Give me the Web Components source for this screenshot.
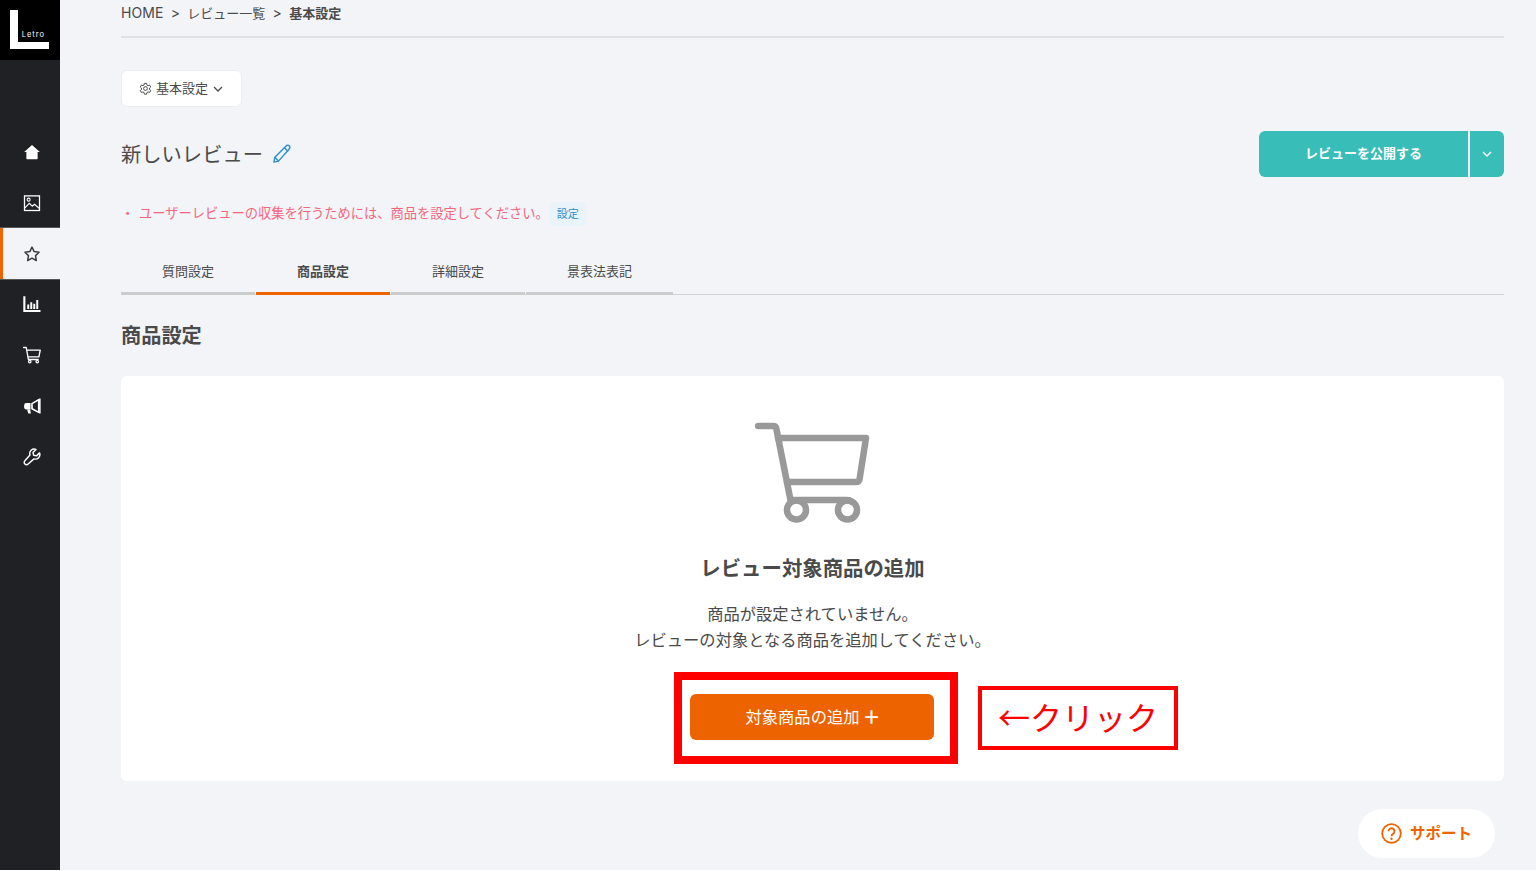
<!DOCTYPE html>
<html lang="ja">
<head>
<meta charset="utf-8">
<title>商品設定</title>
<style>
  html, body { margin: 0; padding: 0; background: #fff; height: 100%; overflow: hidden; }
  body {
    font-family: Inter, "Noto Sans CJK JP", sans-serif;
    color: #4a4a4a;
  }
</style>
</head>
<body>
<review-app></review-app>

<script>
const sideIcons = {
  home: `<path d="M12 2.500 1.500 12h3v8.500a1 1 0 0 0 1 1h13a1 1 0 0 0 1-1V12h3z" fill="currentColor"/>`,
  image: `<rect x="2" y="2.500" width="20" height="19.500" fill="none" stroke="currentColor" stroke-width="1.700"/><circle cx="7.500" cy="7.500" r="2" fill="none" stroke="currentColor" stroke-width="1.400"/><path d="M2.500 18.500 8.500 12.500l3.800 3.800 3-2.600 6.200 5.300" fill="none" stroke="currentColor" stroke-width="1.500"/>`,
  star: `<path d="m12 2.800 2.900 6 6.500.9-4.700 4.500 1.100 6.500L12 17.600l-5.800 3.100 1.100-6.500-4.700-4.500 6.500-.9z" fill="none" stroke="currentColor" stroke-width="2" stroke-linejoin="round"/>`,
  chart: `<path d="M1.800 1.500v19.800h21.500" fill="none" stroke="currentColor" stroke-width="2.800"/><path d="M7 12.500v6M11 9.500v9M15 11.500v7M19 6.500v12" fill="none" stroke="currentColor" stroke-width="2.600"/>`,
  cart: `<path d="M.5 2h3.800l2.900 16h13" fill="none" stroke="currentColor" stroke-width="1.800" stroke-linecap="round" stroke-linejoin="round"/><path d="M5 5.500h18l-1.800 9H6.500" fill="none" stroke="currentColor" stroke-width="1.800" stroke-linejoin="round"/><circle cx="9" cy="20.800" r="1.700" fill="none" stroke="currentColor" stroke-width="1.600"/><circle cx="19" cy="20.800" r="1.700" fill="none" stroke="currentColor" stroke-width="1.600"/>`,
  megaphone: `<path d="M21 3.500 12 8.800v7l9 4.700z" fill="none" stroke="currentColor" stroke-width="2.200" stroke-linejoin="round"/><path d="M4.500 8h5.500v8.500H4.500A3 3 0 0 1 1.500 13.500v-2.500A3 3 0 0 1 4.500 8z" fill="currentColor"/><path d="M5.500 16.500h4l1 5.500H7z" fill="currentColor"/><path d="M22.500 2v20" stroke="currentColor" stroke-width="2"/>`,
  wrench: `<path d="M22 6.500 18 10.500l-3.800-.8-.9-3.800 4-4a6 6 0 0 0-8 7.500L2.500 17a3 3 0 0 0 4.400 4.300l7.700-6.800a6 6 0 0 0 7.400-8z" fill="none" stroke="currentColor" stroke-width="1.900" stroke-linejoin="round"/>`
};

customElements.define("side-bar", class extends HTMLElement {
  constructor() {
    super();
    this.attachShadow({ mode: "open" });
    const items = ["home", "image", "star", "chart", "cart", "megaphone", "wrench"];
    this.shadowRoot.innerHTML = `
      <style>
        :host { display: flex; flex-direction: column; width: 60px; flex: none; background: #202124; color: #fff; }
        .logo { height: 60px; background: #000; display: flex; padding: 10px 0 0 10px; box-sizing: border-box; }
        .logo svg { display: block; }
        .logo text { font-family: Inter, sans-serif; font-size: 7.500px; letter-spacing: 1px; fill: #fff; }
        nav { margin-top: 66.500px; display: flex; flex-direction: column; }
        a { height: 50.830px; display: flex; align-items: center; justify-content: center; box-sizing: border-box; border-left: 3px solid transparent; }
        a svg { width: 18px; height: 18px; display: block; }
        a.on { background: #f2f4f8; color: #3d3d3d; border-left-color: #ef6400; box-shadow: 0 -0.500px 0 #8b8b8b, 0 0.500px 0 #8b8b8b; }
      </style>
      <div class="logo">
        <svg width="40" height="40" viewBox="0 0 40 40">
          <path d="M0 0h8v32h31v7H0z" fill="#fff"/>
          <text x="11.700" y="26.500">Letro</text>
        </svg>
      </div>
      <nav>
        ${items.map((n) => `<a class="${n === "star" ? "on" : ""}"><svg viewBox="0 0 24 24">${sideIcons[n]}</svg></a>`).join("")}
      </nav>`;
  }
});

customElements.define("bread-crumbs", class extends HTMLElement {
  constructor() {
    super();
    this.attachShadow({ mode: "open" });
    this.shadowRoot.innerHTML = `
      <style>
        :host { display: flex; align-items: center; height: 36px; border-bottom: 2px solid #dfe1e6; font-size: 14px; color: #4a4a4a; }
        .row { display: flex; gap: 7.250px; margin-top: -10px; }
        b { font-weight: 700; font-size: 13px; margin-top: -2px; }
        span { font-size: 13px; margin-top: -2px; }
        .home { font-size: 14px; letter-spacing: 0.100px; margin-top: -1px; }
        .sep { font-size: 14px; margin-top: -1px; }
      </style>
      <div class="row"><span class="home">HOME</span><span class="sep">&gt;</span><span>レビュー一覧</span><span class="sep">&gt;</span><b>基本設定</b></div>`;
  }
});

customElements.define("settings-button", class extends HTMLElement {
  constructor() {
    super();
    this.attachShadow({ mode: "open" });
    this.shadowRoot.innerHTML = `
      <style>
        :host { display: inline-flex; align-items: center; justify-content: center; gap: 4px; width: 121px; height: 37px; box-sizing: border-box; background: #fff; border: 1px solid #ebedf1; border-radius: 6px; font-size: 13px; color: #4a4a4a; }
        svg { display: block; }
        span { margin-top: -2px; }
      </style>
      <svg width="13" height="13" viewBox="0 0 24 24" fill="none" stroke="#4a4a4a" stroke-width="1.800" stroke-linejoin="round">
        <circle cx="12" cy="12" r="3.500"/>
        <path d="M10 2.500h4l.6 3 2.200 1.200 2.900-1 2 3.500-2.300 2v2.600l2.300 2-2 3.500-2.900-1-2.200 1.200-.6 3h-4l-.6-3-2.200-1.200-2.900 1-2-3.500 2.300-2v-2.600l-2.300-2 2-3.500 2.900 1 2.200-1.200z"/>
      </svg>
      <span><slot></slot></span>
      <svg width="12" height="12" viewBox="0 0 12 12" fill="none" stroke="#4a4a4a" stroke-width="1.300"><path d="m2 4 4 4 4-4"/></svg>`;
  }
});

customElements.define("publish-button", class extends HTMLElement {
  constructor() {
    super();
    this.attachShadow({ mode: "open" });
    this.shadowRoot.innerHTML = `
      <style>
        :host { display: flex; height: 46px; width: 245px; border-radius: 6px; overflow: hidden; color: #fff; font-size: 13px; font-weight: 700; }
        .main { flex: 1; background: #39bdb9; display: flex; align-items: center; justify-content: center; padding-bottom: 3px; box-sizing: border-box; }
        .more { width: 34px; margin-left: 2px; background: #39bdb9; display: flex; align-items: center; justify-content: center; }
      </style>
      <div class="main"><slot></slot></div>
      <div class="more"><svg width="12" height="12" viewBox="0 0 12 12" fill="none" stroke="#fff" stroke-width="1.400"><path d="m2 4 4 4 4-4"/></svg></div>`;
  }
});

customElements.define("tab-bar", class extends HTMLElement {
  constructor() {
    super();
    this.attachShadow({ mode: "open" });
    const tabs = JSON.parse(this.getAttribute("tabs"));
    const active = this.getAttribute("active");
    this.shadowRoot.innerHTML = `
      <style>
        :host { display: flex; gap: 1px; border-bottom: 1px solid #cfd1d5; height: 45px; box-sizing: border-box; font-size: 13px; color: #4a4a4a; }
        div { display: flex; align-items: center; justify-content: center; padding: 0 41px 2px; height: 45px; box-sizing: border-box; border-bottom: 3px solid #cccccc; }
        div.on { border-bottom-color: #ef6400; font-weight: 700; }
        div.s { width: 134px; padding-left: 0; padding-right: 0; }
      </style>
      ${tabs.map((t, i) => `<div class="${t === active ? "on " : ""}${i < 3 ? "s" : ""}">${t}</div>`).join("")}`;
  }
});

customElements.define("empty-panel", class extends HTMLElement {
  constructor() {
    super();
    this.attachShadow({ mode: "open" });
    this.shadowRoot.innerHTML = `
      <style>
        :host { display: flex; flex-direction: column; align-items: center; height: 405px; box-sizing: border-box; padding-top: 46px; background: #fff; border-radius: 6px; position: relative; color: #4a4a4a; }
        svg { display: block; }
        h3 { margin: 30px 0 0; font-size: 20.400px; line-height: 30px; font-weight: 700; }
        p { margin: 17px 0 0; font-size: 16.280px; line-height: 26px; text-align: center; }
        .cta { margin: 41px 1px 0 0; width: 244px; height: 46px; box-sizing: border-box; padding: 0 0 3px 2px; border-radius: 6px; background: #ed6300; color: #fff; display: flex; align-items: center; justify-content: center; gap: 3px; font-size: 16.300px; }
      </style>
      <svg width="116" height="102" viewBox="0 0 116 102" fill="none" stroke="#999" stroke-width="6.500" stroke-linecap="round" stroke-linejoin="round">
        <path d="M3 4h15.500c1.600 0 2.500 1 2.800 2.500L35.500 78H92c1.500 0 3 .5 4 1.500"/>
        <path d="M23 16h88l-6.500 41.500c-.4 1.700-1.500 2.500-3.200 2.500H32"/>
        <circle cx="41.500" cy="88" r="9.500"/>
        <circle cx="92.500" cy="88" r="9.500"/>
      </svg>
      <h3><slot name="title"></slot></h3>
      <p><slot name="text"></slot></p>
      <div class="cta"><slot name="action"></slot></div>`;
  }
});

customElements.define("note-box", class extends HTMLElement {
  constructor() {
    super();
    this.attachShadow({ mode: "open" });
    this.shadowRoot.innerHTML = `
      <style>
        :host { position: absolute; box-sizing: border-box; border-style: solid; border-color: #ff0000; display: flex; align-items: center; justify-content: center; color: #ff0000; }
      </style>
      <slot></slot>`;
  }
});

customElements.define("support-button", class extends HTMLElement {
  constructor() {
    super();
    this.attachShadow({ mode: "open" });
    this.shadowRoot.innerHTML = `
      <style>
        :host { position: absolute; left: 1358px; top: 809px; width: 137px; height: 49px; border-radius: 25px; background: #fff; display: flex; align-items: center; justify-content: center; gap: 8px; color: #ef6400; font-size: 15.500px; font-weight: 700; }
        span { margin-top: -3px; }
      </style>
      <svg width="21" height="21" viewBox="0 0 21 21" fill="none" stroke="#ef6400" stroke-width="1.800">
        <circle cx="10.500" cy="10.500" r="9.300"/>
        <path d="M7.500 8.300a3 3 0 1 1 4.700 2.500c-1.200.8-1.700 1.300-1.700 2.500" stroke-width="1.900"/>
        <circle cx="10.500" cy="15.800" r="1.200" fill="#ef6400" stroke="none"/>
      </svg>
      <span><slot></slot></span>`;
  }
});

customElements.define("review-app", class extends HTMLElement {
  constructor() {
    super();
    this.attachShadow({ mode: "open" });
    this.shadowRoot.innerHTML = `
      <style>
        :host { display: flex; height: 870px; background: #f2f4f8; position: relative; font-family: Inter, "Noto Sans CJK JP", sans-serif; color: #4a4a4a; }
        main { flex: 1; padding: 0 32px 0 61px; min-width: 0; display: flex; flex-direction: column; }
        .settings { margin-top: 32px; }
        .head { display: flex; align-items: center; justify-content: space-between; margin-top: 24px; height: 46px; }
        .name { display: flex; align-items: center; gap: 10px; font-size: 20.300px; }
        .name span { margin-top: -3px; }
        .name svg { margin-left: -1px; }
        .warn { margin-top: 24px; height: 26px; display: flex; align-items: center; font-size: 13.260px; color: #f4667d; }
        .warn i { font-style: normal; width: 18px; margin-top: -3px; }
        .warn span { margin-top: -3px; }
        .warn em { font-style: normal; margin-left: 1px; background: #e9f3fa; color: #2f8fce; font-size: 11px; padding: 0 7px; height: 24px; line-height: 24px; border-radius: 4px; }
        tab-bar { margin-top: 23px; }
        h2 { margin: 26px 0 25px; font-size: 20.200px; line-height: 30px; font-weight: 700; }
        .big { font-size: 32px; line-height: 1; font-family: "Noto Sans CJK JP", sans-serif; padding-bottom: 5px; }
        .plus { font-size: 18px; line-height: 1; font-weight: 700; margin-top: 5px; }
      </style>
      <side-bar></side-bar>
      <main>
        <bread-crumbs></bread-crumbs>
        <div class="settings"><settings-button>基本設定</settings-button></div>
        <div class="head">
          <div class="name"><span>新しいレビュー</span>
            <svg width="20" height="20" viewBox="0 0 21 21" fill="none" stroke="#2f8fce" stroke-width="1.500" stroke-linejoin="round"><path d="M2 19l1-5.200L14.800 2c1-1 2.400-1 3.300-.1s1 2.300 0 3.300L6.800 18z"/><path d="M3 13.800 7 18M13 4l4 4"/></svg>
          </div>
          <publish-button>レビューを公開する</publish-button>
        </div>
        <div class="warn"><i>・</i><span>ユーザーレビューの収集を行うためには、商品を設定してください。</span><em>設定</em></div>
        <tab-bar tabs='["質問設定","商品設定","詳細設定","景表法表記"]' active="商品設定"></tab-bar>
        <h2>商品設定</h2>
        <empty-panel>
          <span slot="title">レビュー対象商品の追加</span>
          <span slot="text">商品が設定されていません。<br>レビューの対象となる商品を追加してください。</span>
          <span slot="action">対象商品の追加</span>
          <span slot="action" class="plus">＋</span>
        </empty-panel>
      </main>
      <note-box style="left:674px;top:672px;width:284px;height:92px;border-width:8px"></note-box>
      <note-box style="left:978px;top:686px;width:200px;height:64px;border-width:4px"><span class="big">←クリック</span></note-box>
      <support-button>サポート</support-button>`;
  }
});
</script>
</body>
</html>
